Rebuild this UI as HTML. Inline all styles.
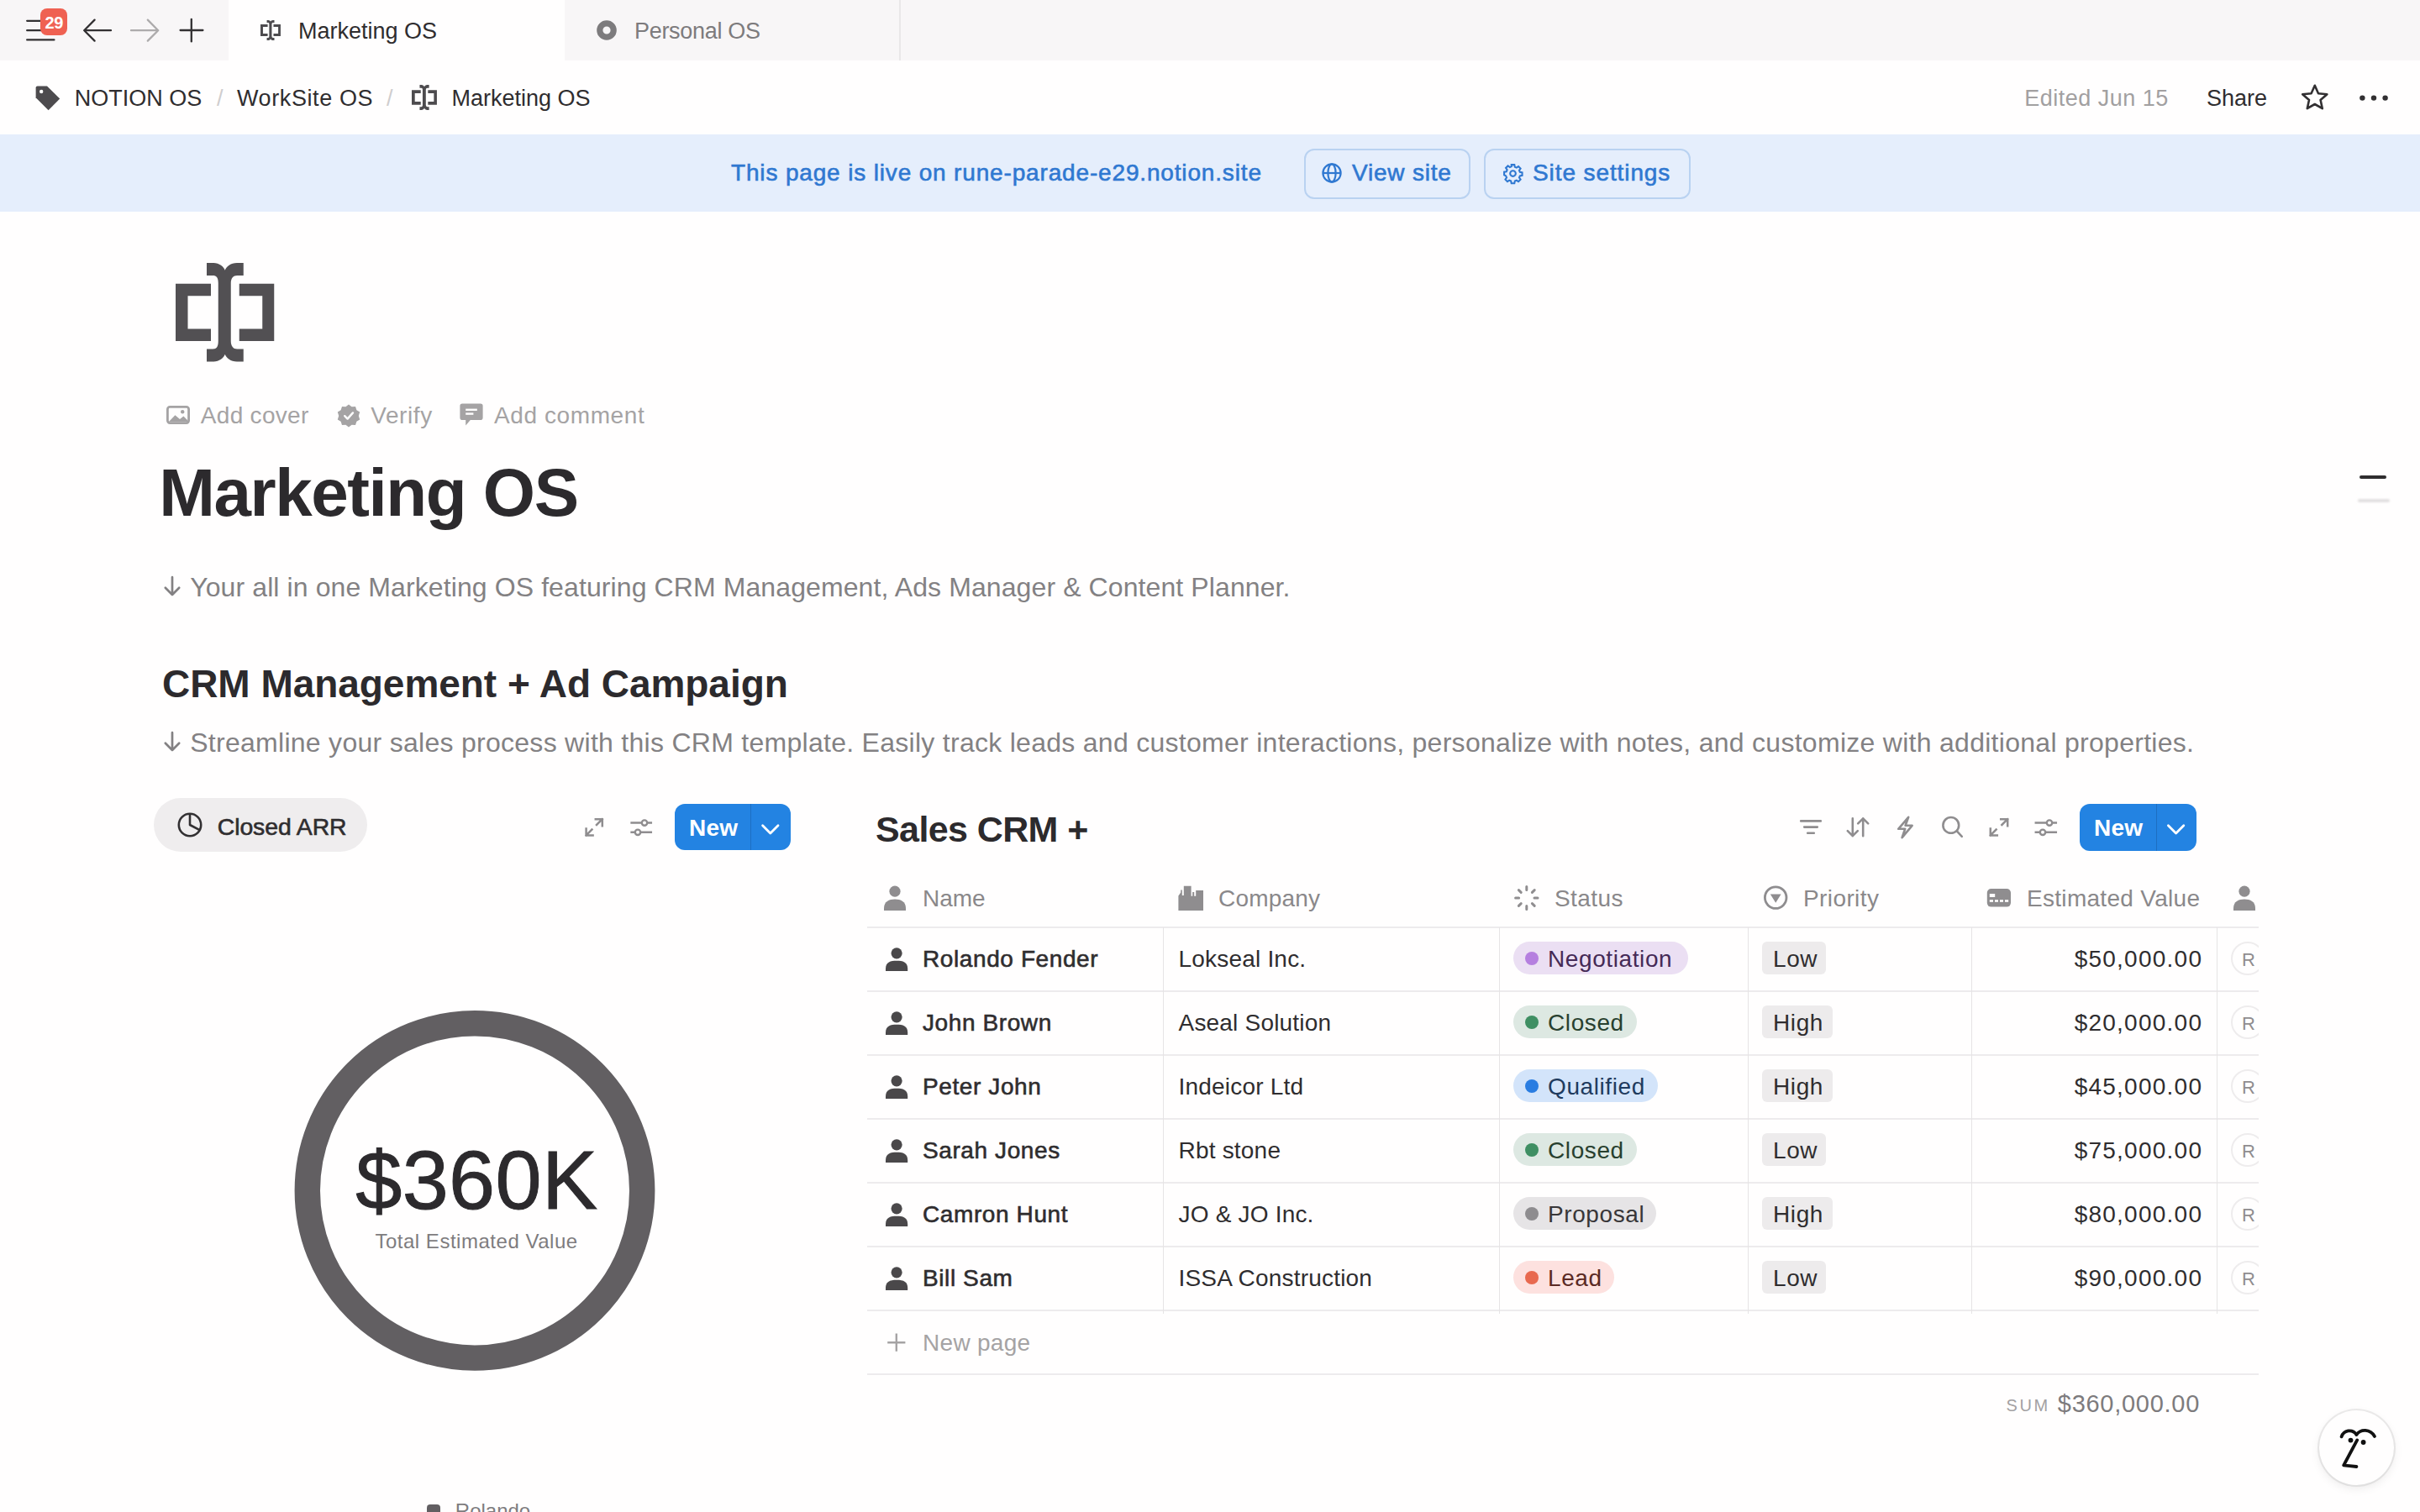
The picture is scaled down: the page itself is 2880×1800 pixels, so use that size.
<!DOCTYPE html>
<html><head><meta charset="utf-8">
<style>
html,body{margin:0;padding:0;background:#fffefe;}
#root{zoom:2;width:1440px;height:900px;position:relative;overflow:hidden;background:#fffefe;font-family:"Liberation Sans",sans-serif;color:#2f2d2f;}
.t{position:absolute;line-height:1;white-space:nowrap;}
.a{position:absolute;}
svg{position:absolute;overflow:visible;}
.med{-webkit-text-stroke:0.3px currentColor;}
</style></head>
<body><div id="root">

<!-- TAB BAR -->
<div class="a" style="left:0;top:0;width:1440px;height:36px;background:#f8f6f7;"></div>
<div class="a" style="left:136px;top:0;width:200px;height:36px;background:#fffefe;"></div>
<div class="a" style="left:535px;top:0;width:1px;height:36px;background:#e9e7e8;"></div>

<!-- hamburger -->
<svg style="left:0;top:0" width="1" height="1">
  <g stroke="#323032" stroke-width="1.15" stroke-linecap="round" fill="none">
    <line x1="16.1" y1="12.4" x2="26" y2="12.4"/>
    <line x1="16.1" y1="18.1" x2="26" y2="18.1"/>
    <line x1="16.1" y1="23.7" x2="32.2" y2="23.7"/>
  </g>
</svg>
<div class="a" style="left:24.1px;top:5px;width:15.9px;height:15.8px;border-radius:4px;background:#ef6152;"></div>
<div class="t" style="left:24.1px;top:8.60px;width:16px;text-align:center;font-size:10px;font-weight:bold;color:#fff;letter-spacing:-0.2px">29</div>
<!-- back / forward / plus -->
<svg style="left:0;top:0" width="1" height="1">
  <g stroke="#323032" stroke-width="1.15" stroke-linecap="round" stroke-linejoin="round" fill="none">
    <path d="M66 18.1 H50.1 M56.3 11.8 L50.1 18.1 L56.3 24.3"/>
    <path d="M113.9 11.4 V24.7 M107.3 18 H120.7"/>
  </g>
  <g stroke="#adabac" stroke-width="1.15" stroke-linecap="round" stroke-linejoin="round" fill="none">
    <path d="M78 18.1 H94.1 M87.9 11.8 L94.1 18.1 L87.9 24.3"/>
  </g>
</svg>
<!-- tab 1 -->
<svg style="left:155px;top:12px" width="12" height="12" viewBox="237 93 470 470">
  <g fill="#4d4b4e">
    <path d="M237,192 H405 V250 H295 V407 H405 V465 H237 Z"/>
    <path d="M706,192 H540 V250 H650 V407 H540 V465 H706 Z"/>
    <path d="M385,93 H415 C445,93 465,110 472,128 C479,110 499,93 529,93 H560 V153 H530 C512,153 500,165 500,190 V465 C500,490 512,503 530,503 H560 V563 H529 C499,563 479,546 472,528 C465,546 445,563 415,563 H385 V503 H415 C433,503 440,490 440,465 V190 C440,165 433,153 415,153 H385 Z"/>
  </g>
</svg>
<div class="t" style="left:177.5px;top:12.00px;font-size:13.5px;color:#2f2d2f">Marketing OS</div>
<!-- tab 2 -->
<svg style="left:355px;top:12px" width="12" height="12" viewBox="0 0 12 12">
  <circle cx="6" cy="6" r="4.1" fill="none" stroke="#7d7b7d" stroke-width="3.6"/>
</svg>
<div class="t" style="left:377.5px;top:12.00px;font-size:13.5px;color:#7d7b7d;letter-spacing:-0.15px">Personal OS</div>

<!-- BREADCRUMB -->
<svg style="left:21px;top:51px" width="15" height="15" viewBox="0 0 15 15">
  <path d="M0.3 1.2 Q0.3 0.2 1.3 0.2 H7 L14.6 7.8 L7.8 14.6 L0.3 7.1 Z" fill="#4d4b4e"/>
  <circle cx="3.6" cy="3.5" r="1.1" fill="#fffefe"/>
</svg>
<div class="t" style="left:44.4px;top:52.10px;font-size:13.5px">NOTION OS</div>
<div class="t" style="left:129px;top:52.10px;font-size:13.5px;color:#cfcdce">/</div>
<div class="t" style="left:141px;top:52.10px;font-size:13.5px;letter-spacing:0.3px">WorkSite OS</div>
<div class="t" style="left:230px;top:52.10px;font-size:13.5px;color:#cfcdce">/</div>
<svg style="left:245px;top:50.6px" width="15" height="15" viewBox="237 93 470 470">
  <g fill="#4d4b4e">
    <path d="M237,192 H405 V250 H295 V407 H405 V465 H237 Z"/>
    <path d="M706,192 H540 V250 H650 V407 H540 V465 H706 Z"/>
    <path d="M385,93 H415 C445,93 465,110 472,128 C479,110 499,93 529,93 H560 V153 H530 C512,153 500,165 500,190 V465 C500,490 512,503 530,503 H560 V563 H529 C499,563 479,546 472,528 C465,546 445,563 415,563 H385 V503 H415 C433,503 440,490 440,465 V190 C440,165 433,153 415,153 H385 Z"/>
  </g>
</svg>
<div class="t" style="left:268.75px;top:52.10px;font-size:13.5px">Marketing OS</div>

<div class="t" style="left:1204.6px;top:52.10px;font-size:13.5px;color:#a2a0a1;letter-spacing:0.25px">Edited Jun 15</div>
<div class="t" style="left:1313px;top:52.10px;font-size:13.5px">Share</div>
<svg style="left:1368.75px;top:49.75px" width="17" height="16" viewBox="0 0 17 16">
  <path d="M8.4 0.9 L10.5 5.6 L15.7 6.1 L11.8 9.5 L12.9 14.6 L8.4 12 L3.9 14.6 L5 9.5 L1.1 6.1 L6.3 5.6 Z" fill="none" stroke="#323032" stroke-width="1.3" stroke-linejoin="round"/>
</svg>
<svg style="left:1404px;top:56px" width="17" height="5" viewBox="0 0 17 5">
  <circle cx="1.7" cy="2.3" r="1.6" fill="#323032"/><circle cx="8.5" cy="2.3" r="1.6" fill="#323032"/><circle cx="15.3" cy="2.3" r="1.6" fill="#323032"/>
</svg>

<!-- BANNER -->
<div class="a" style="left:0;top:80px;width:1440px;height:46px;background:#e5eefc;"></div>
<div class="t med" style="left:435px;top:95.9px;font-size:14px;color:#2f78d1;letter-spacing:0.42px">This page is live on rune-parade-e29.notion.site</div>
<div class="a" style="left:776px;top:88.5px;width:97px;height:28px;border:1px solid #b9d2f1;border-radius:6px;"></div>
<svg style="left:786.5px;top:97px" width="12" height="12" viewBox="0 0 12 12">
  <g fill="none" stroke="#2f78d1" stroke-width="1.1"><circle cx="6" cy="6" r="5.3"/><ellipse cx="6" cy="6" rx="2.3" ry="5.3"/><line x1="0.7" y1="6" x2="11.3" y2="6"/></g>
</svg>
<div class="t med" style="left:804.5px;top:96.2px;font-size:14px;color:#2f78d1;letter-spacing:0.4px">View site</div>
<div class="a" style="left:883px;top:88.5px;width:121px;height:28px;border:1px solid #b9d2f1;border-radius:6px;"></div>
<svg style="left:894px;top:96.8px" width="12.5" height="12.5" viewBox="0 0 24 24">
  <path fill="none" stroke="#2f78d1" stroke-width="2" d="M10.3 2h3.4l.5 2.6 1.9.8 2.2-1.5 2.4 2.4-1.5 2.2.8 1.9 2.6.5v3.4l-2.6.5-.8 1.9 1.5 2.2-2.4 2.4-2.2-1.5-1.9.8-.5 2.6h-3.4l-.5-2.6-1.9-.8-2.2 1.5-2.4-2.4 1.5-2.2-.8-1.9L2 13.7v-3.4l2.6-.5.8-1.9-1.5-2.2 2.4-2.4 2.2 1.5 1.9-.8z"/>
  <circle cx="12" cy="12" r="3.2" fill="none" stroke="#2f78d1" stroke-width="2"/>
</svg>
<div class="t med" style="left:912px;top:96.2px;font-size:14px;color:#2f78d1;letter-spacing:0.45px">Site settings</div>


<!-- PAGE ICON -->
<svg style="left:104.6px;top:156.6px" width="58.75" height="58.75" viewBox="237 93 470 470">
  <g fill="#525053">
    <path d="M237,192 H405 V250 H295 V407 H405 V465 H237 Z"/>
    <path d="M706,192 H540 V250 H650 V407 H540 V465 H706 Z"/>
    <path d="M385,93 H415 C445,93 465,110 472,128 C479,110 499,93 529,93 H560 V153 H530 C512,153 500,165 500,190 V465 C500,490 512,503 530,503 H560 V563 H529 C499,563 479,546 472,528 C465,546 445,563 415,563 H385 V503 H415 C433,503 440,490 440,465 V190 C440,165 433,153 415,153 H385 Z"/>
  </g>
</svg>

<!-- ADD COVER ROW -->
<svg style="left:99px;top:241.5px" width="14" height="11" viewBox="0 0 14 11">
  <rect x="0.7" y="0.7" width="12.6" height="9.6" rx="1.4" fill="none" stroke="#a5a3a4" stroke-width="1.4"/>
  <path d="M1.5 9.5 L5.2 5.6 L8 8 L10.2 6.3 L12.6 8.6 V9.6 H1.5 Z" fill="#a5a3a4"/>
  <circle cx="9.6" cy="3.6" r="1.1" fill="#a5a3a4"/>
</svg>
<div class="t" style="left:119.4px;top:240.45px;font-size:14px;color:#a5a3a4;letter-spacing:0.15px">Add cover</div>
<svg style="left:200.6px;top:240.25px" width="14" height="14" viewBox="0 0 14 14">
  <path d="M7 0.3 L8.8 1.6 L11 1.5 L11.7 3.6 L13.6 4.8 L12.9 7 L13.6 9.2 L11.7 10.4 L11 12.5 L8.8 12.4 L7 13.7 L5.2 12.4 L3 12.5 L2.3 10.4 L0.4 9.2 L1.1 7 L0.4 4.8 L2.3 3.6 L3 1.5 L5.2 1.6 Z" fill="#a5a3a4"/>
  <path d="M4.6 7.1 L6.3 8.8 L9.5 5.2" fill="none" stroke="#fffefe" stroke-width="1.2" stroke-linecap="round" stroke-linejoin="round"/>
</svg>
<div class="t" style="left:220.6px;top:240.45px;font-size:14px;color:#a5a3a4;letter-spacing:0.3px">Verify</div>
<svg style="left:273.5px;top:240px" width="14" height="14" viewBox="0 0 14 14">
  <path d="M1.6 0.2 H12.4 Q13.8 0.2 13.8 1.6 V8.6 Q13.8 10 12.4 10 H6.4 L3.6 13.2 V10 H1.6 Q0.2 10 0.2 8.6 V1.6 Q0.2 0.2 1.6 0.2 Z" fill="#a5a3a4"/>
  <rect x="3.6" y="3.3" width="6.8" height="1.2" fill="#fffefe"/>
  <rect x="3.6" y="5.7" width="4.6" height="1.2" fill="#fffefe"/>
</svg>
<div class="t" style="left:294px;top:240.45px;font-size:14px;color:#a5a3a4;letter-spacing:0.3px">Add comment</div>

<!-- TITLE -->
<div class="t" style="left:94.6px;top:273.64px;font-size:40px;font-weight:bold;color:#2c2a2d;letter-spacing:-0.72px">Marketing OS</div>

<!-- DESC -->
<svg style="left:97.25px;top:343.2px" width="10" height="12" viewBox="0 0 10 12"><path d="M5 0.6 V11 M0.9 6.9 L5 11 L9.1 6.9" fill="none" stroke="#838183" stroke-width="1.35" stroke-linecap="round" stroke-linejoin="round"/></svg><div class="t" style="left:113.1px;top:341.46px;font-size:16px;color:#838183;letter-spacing:0.05px">Your all in one Marketing OS featuring CRM Management, Ads Manager &amp; Content Planner.</div>
<div class="t" style="left:96.5px;top:395.50px;font-size:23px;font-weight:bold;color:#2c2a2d;letter-spacing:-0.02px">CRM Management + Ad Campaign</div>
<svg style="left:97.25px;top:435.7px" width="10" height="12" viewBox="0 0 10 12"><path d="M5 0.6 V11 M0.9 6.9 L5 11 L9.1 6.9" fill="none" stroke="#838183" stroke-width="1.35" stroke-linecap="round" stroke-linejoin="round"/></svg><div class="t" style="left:113.1px;top:433.96px;font-size:16px;color:#838183;letter-spacing:0.14px">Streamline your sales process with this CRM template. Easily track leads and customer interactions, personalize with notes, and customize with additional properties.</div>


<!-- CHART VIEW HEADER -->
<div class="a" style="left:91.25px;top:475px;width:127px;height:32px;border-radius:16px;background:#efedee;"></div>
<svg style="left:105.6px;top:483.5px" width="15" height="15" viewBox="0 0 15 15">
  <g fill="none" stroke="#323032" stroke-width="1.3" stroke-linejoin="round"><circle cx="7.5" cy="7.5" r="6.6"/><path d="M7.5 0.9 V7.5 L13.3 10.6"/></g>
</svg>
<div class="t med" style="left:129.4px;top:484.9px;font-size:14.2px;color:#2f2d2f;letter-spacing:-0.05px">Closed ARR</div>

<svg style="left:0;top:0" width="1" height="1">
  <g fill="none" stroke="#8f8d8f" stroke-width="1.25" stroke-linecap="square">
    <path d="M352.2 493.8 L348.8 497.2 M348.8 493.2 V497.2 H352.8"/>
    <path d="M355 491 L358.4 487.6 M354.4 487.6 H358.4 V491.6"/>
    <path d="M375.8 489.8 H381.6 M385.4 489.8 H387.4 M375.8 495.4 H377.6 M381.4 495.4 H387.4"/>
  </g>
  <g fill="none" stroke="#8f8d8f" stroke-width="1.2"><circle cx="383.5" cy="489.8" r="1.6"/><circle cx="379.5" cy="495.4" r="1.6"/></g>
</svg>
<div class="a" style="left:401.6px;top:478.4px;width:68.7px;height:27.85px;border-radius:6px;background:#2383e2;"></div>
<div class="a" style="left:446.6px;top:478.4px;width:0.6px;height:27.85px;background:#1d6fc2;"></div>
<div class="t" style="left:410px;top:486.05px;font-size:14px;font-weight:bold;color:#fff;letter-spacing:0.1px">New</div>
<svg style="left:0;top:0" width="1" height="1"><path d="M453.8 491.4 L458.4 496 L463 491.4" fill="none" stroke="#fff" stroke-width="1.4" stroke-linecap="round" stroke-linejoin="round"/></svg>

<!-- DONUT -->
<svg style="left:0;top:0" width="1" height="1"><circle cx="282.5" cy="708.7" r="99.6" fill="none" stroke="#625f62" stroke-width="15.2"/></svg>
<div class="t" style="left:211.6px;top:677.7px;font-size:49.5px;color:#2c2a2d;letter-spacing:0.2px;-webkit-text-stroke:0.5px #2c2a2d">$360K</div>
<div class="t" style="left:223.2px;top:733.14px;font-size:12px;color:#7e7c7e;letter-spacing:0.26px">Total Estimated Value</div>
<div class="a" style="left:254.2px;top:895.5px;width:7.7px;height:8px;border-radius:2px;background:#625f62;"></div>
<div class="t" style="left:270.9px;top:893.7px;font-size:12px;color:#7e7c7e;letter-spacing:0px">Rolando</div>

<!-- SALES CRM HEADER -->
<div class="t" style="left:521px;top:482.8px;font-size:21.5px;font-weight:bold;color:#2c2a2d;letter-spacing:-0.3px">Sales CRM +</div>
<svg style="left:0;top:0" width="1" height="1">
  <g fill="none" stroke="#8f8d8f" stroke-width="1.3" stroke-linecap="round" stroke-linejoin="round">
    <path d="M1071.6 488.7 H1083.4 M1073.6 492.3 H1081.4 M1075.6 495.9 H1079.4"/>
    <path d="M1102.4 487.2 V497.6 M1099.4 494.6 L1102.4 497.6 L1105.4 494.6"/>
    <path d="M1108.6 497.6 V487.2 M1105.6 490.2 L1108.6 487.2 L1111.6 490.2"/>
    <path d="M1135.6 486.4 L1129.6 493.4 H1133.6 L1131.8 498.6 L1137.8 491.4 H1133.8 Z"/>
    <circle cx="1160.9" cy="491.2" r="4.7"/>
    <path d="M1164.4 494.7 L1167.4 497.9"/>
  </g>
  <g fill="none" stroke="#8f8d8f" stroke-width="1.25" stroke-linecap="square">
    <path d="M1187.8 493.8 L1184.4 497.2 M1184.4 493.2 V497.2 H1188.4"/>
    <path d="M1191.2 491 L1194.6 487.6 M1190.6 487.6 H1194.6 V491.6"/>
    <path d="M1211.4 489.8 H1217.6 M1221.4 489.8 H1223.4 M1211.4 495.4 H1213.6 M1217.4 495.4 H1223.4"/>
  </g>
  <g fill="none" stroke="#8f8d8f" stroke-width="1.2"><circle cx="1219.5" cy="489.8" r="1.6"/><circle cx="1215.5" cy="495.4" r="1.6"/></g>
</svg>
<div class="a" style="left:1237.5px;top:478.5px;width:69.4px;height:27.75px;border-radius:6px;background:#2383e2;"></div>
<div class="a" style="left:1283.1px;top:478.5px;width:0.6px;height:27.75px;background:#1d6fc2;"></div>
<div class="t" style="left:1246px;top:486.05px;font-size:14px;font-weight:bold;color:#fff;letter-spacing:0.1px">New</div>
<svg style="left:0;top:0" width="1" height="1"><path d="M1290.2 491.4 L1294.8 496 L1299.4 491.4" fill="none" stroke="#fff" stroke-width="1.4" stroke-linecap="round" stroke-linejoin="round"/></svg>


<!-- TABLE -->
<div class="a" style="left:516px;top:551.5px;width:827.75px;height:1px;background:#edebed;"></div>
<div class="a" style="left:516px;top:589.5px;width:827.75px;height:1px;background:#edebed;"></div>
<div class="a" style="left:516px;top:627.5px;width:827.75px;height:1px;background:#edebed;"></div>
<div class="a" style="left:516px;top:665.5px;width:827.75px;height:1px;background:#edebed;"></div>
<div class="a" style="left:516px;top:703.5px;width:827.75px;height:1px;background:#edebed;"></div>
<div class="a" style="left:516px;top:741.5px;width:827.75px;height:1px;background:#edebed;"></div>
<div class="a" style="left:516px;top:779.5px;width:827.75px;height:1px;background:#edebed;"></div>
<div class="a" style="left:516px;top:817.5px;width:827.75px;height:1px;background:#edebed;"></div>
<div class="a" style="left:691.75px;top:552px;width:0.5px;height:230px;background:#e6e4e5;"></div>
<div class="a" style="left:891.75px;top:552px;width:0.5px;height:230px;background:#e6e4e5;"></div>
<div class="a" style="left:1039.75px;top:552px;width:0.5px;height:230px;background:#e6e4e5;"></div>
<div class="a" style="left:1172.75px;top:552px;width:0.5px;height:230px;background:#e6e4e5;"></div>
<div class="a" style="left:1318.75px;top:552px;width:0.5px;height:230px;background:#e6e4e5;"></div>
<svg style="left:0;top:0" width="1" height="1">
  <g fill="#8f8d8f">
    <circle cx="532.5" cy="530.6" r="3.3"/>
    <path d="M526 542 V540.6 C526 536.6 529 535.2 532.5 535.2 C536 535.2 539 536.6 539 540.6 V542 Z"/>
    <path d="M701.2 542 V533.2 L702.6 531.2 V529.8 H703.4 V533 H704.4 V527.4 H708.8 V533.4 H709.6 V531 H710.6 V533.4 H711.6 V530 H716 V542 Z"/>
    <circle cx="1335.5" cy="530.6" r="3.3"/>
    <path d="M1329 542 V540.6 C1329 536.6 1332 535.2 1335.5 535.2 C1339 535.2 1342 536.6 1342 540.6 V542 Z"/>
    <rect x="1182.4" y="529" width="14.1" height="10.8" rx="2.4"/>
  </g>
  <g fill="#fffefe">
    <rect x="1183.9" y="532" width="3.2" height="2"/>
    <rect x="1183.9" y="535.6" width="2.1" height="1.3"/><rect x="1187" y="535.6" width="2" height="1.3"/><rect x="1190" y="535.6" width="2" height="1.3"/><rect x="1193" y="535.6" width="2.1" height="1.3"/>
  </g>
  <g stroke="#8f8d8f" stroke-width="1.5" stroke-linecap="round">
    <path d="M908.4 527.8 V529.8 M908.4 539.2 V541.2 M901.8 534.5 H903.8 M913 534.5 H915 M903.7 529.8 L905.1 531.2 M911.7 537.8 L913.1 539.2 M903.7 539.2 L905.1 537.8 M911.7 531.2 L913.1 529.8"/>
  </g>
  <circle cx="1056.6" cy="534.3" r="6.4" fill="none" stroke="#8f8d8f" stroke-width="1.4"/>
  <path d="M1053.4 532.2 H1059.8 L1056.6 537.4 Z" fill="#8f8d8f"/>
</svg>
<div class="t" style="left:549px;top:527.95px;font-size:14px;color:#8a888a;letter-spacing:0px">Name</div>
<div class="t" style="left:725px;top:527.95px;font-size:14px;color:#8a888a;letter-spacing:0.1px">Company</div>
<div class="t" style="left:925px;top:527.95px;font-size:14px;color:#8a888a;letter-spacing:0.2px">Status</div>
<div class="t" style="left:1073px;top:527.95px;font-size:14px;color:#8a888a;letter-spacing:0.2px">Priority</div>
<div class="t" style="left:1206px;top:527.95px;font-size:14px;color:#8a888a;letter-spacing:0.15px">Estimated Value</div>
<svg style="left:526.9px;top:564px" width="13.1" height="14" viewBox="0 0 13.1 14"><circle cx="6.55" cy="3.4" r="3.3" fill="#4a484a"/><path d="M0 14 V12.6 C0 8.6 3 7.9 6.55 7.9 C10.1 7.9 13.1 8.6 13.1 12.6 V14 Z" fill="#4a484a"/></svg>
<div class="t med" style="left:549px;top:564.05px;font-size:14px;color:#2f2d2f;letter-spacing:0.3px">Rolando Fender</div>
<div class="t" style="left:701.25px;top:564.05px;font-size:14px;color:#2f2d2f;letter-spacing:0.1px">Lokseal Inc.</div>
<div class="a" style="left:900.6px;top:560.6px;width:103.80px;height:19.6px;border-radius:10px;background:#ebdff3;"></div>
<div class="a" style="left:907.5px;top:566.6px;width:8px;height:8px;border-radius:4px;background:#b57fdf;"></div>
<div class="t" style="left:921px;top:564.15px;font-size:14px;color:#452a56;letter-spacing:0.3px">Negotiation</div>
<div class="a" style="left:1048.6px;top:560.6px;width:37.7px;height:19.6px;border-radius:3px;background:#edebec;"></div>
<div class="t" style="left:1055px;top:564.15px;font-size:14px;color:#2f2d2f;letter-spacing:0.3px">Low</div>
<div class="t" style="right:129.4px;top:564.05px;font-size:14px;color:#2f2d2f;letter-spacing:0.62px">$50,000.00</div>
<div class="a" style="left:1319.5px;top:552px;width:24.25px;height:37px;overflow:hidden;"><div class="a" style="left:8px;top:8.7px;width:18px;height:18px;border-radius:50%;border:1px solid #eeeced;background:#fffefe;"></div><div class="t" style="left:14.5px;top:13.90px;font-size:11px;color:#8f8d8f">R</div></div>
<svg style="left:526.9px;top:602px" width="13.1" height="14" viewBox="0 0 13.1 14"><circle cx="6.55" cy="3.4" r="3.3" fill="#4a484a"/><path d="M0 14 V12.6 C0 8.6 3 7.9 6.55 7.9 C10.1 7.9 13.1 8.6 13.1 12.6 V14 Z" fill="#4a484a"/></svg>
<div class="t med" style="left:549px;top:602.05px;font-size:14px;color:#2f2d2f;letter-spacing:0.3px">John Brown</div>
<div class="t" style="left:701.25px;top:602.05px;font-size:14px;color:#2f2d2f;letter-spacing:0.1px">Aseal Solution</div>
<div class="a" style="left:900.6px;top:598.6px;width:73.60px;height:19.6px;border-radius:10px;background:#dde8e2;"></div>
<div class="a" style="left:907.5px;top:604.6px;width:8px;height:8px;border-radius:4px;background:#3f8f63;"></div>
<div class="t" style="left:921px;top:602.15px;font-size:14px;color:#28402f;letter-spacing:0.3px">Closed</div>
<div class="a" style="left:1048.6px;top:598.6px;width:41.9px;height:19.6px;border-radius:3px;background:#edebec;"></div>
<div class="t" style="left:1055px;top:602.15px;font-size:14px;color:#2f2d2f;letter-spacing:0.3px">High</div>
<div class="t" style="right:129.4px;top:602.05px;font-size:14px;color:#2f2d2f;letter-spacing:0.62px">$20,000.00</div>
<div class="a" style="left:1319.5px;top:590px;width:24.25px;height:37px;overflow:hidden;"><div class="a" style="left:8px;top:8.7px;width:18px;height:18px;border-radius:50%;border:1px solid #eeeced;background:#fffefe;"></div><div class="t" style="left:14.5px;top:13.90px;font-size:11px;color:#8f8d8f">R</div></div>
<svg style="left:526.9px;top:640px" width="13.1" height="14" viewBox="0 0 13.1 14"><circle cx="6.55" cy="3.4" r="3.3" fill="#4a484a"/><path d="M0 14 V12.6 C0 8.6 3 7.9 6.55 7.9 C10.1 7.9 13.1 8.6 13.1 12.6 V14 Z" fill="#4a484a"/></svg>
<div class="t med" style="left:549px;top:640.05px;font-size:14px;color:#2f2d2f;letter-spacing:0.3px">Peter John</div>
<div class="t" style="left:701.25px;top:640.05px;font-size:14px;color:#2f2d2f;letter-spacing:0.1px">Indeicor Ltd</div>
<div class="a" style="left:900.6px;top:636.6px;width:86.15px;height:19.6px;border-radius:10px;background:#d3e4fa;"></div>
<div class="a" style="left:907.5px;top:642.6px;width:8px;height:8px;border-radius:4px;background:#2a7de1;"></div>
<div class="t" style="left:921px;top:640.15px;font-size:14px;color:#1f3b5e;letter-spacing:0.3px">Qualified</div>
<div class="a" style="left:1048.6px;top:636.6px;width:41.9px;height:19.6px;border-radius:3px;background:#edebec;"></div>
<div class="t" style="left:1055px;top:640.15px;font-size:14px;color:#2f2d2f;letter-spacing:0.3px">High</div>
<div class="t" style="right:129.4px;top:640.05px;font-size:14px;color:#2f2d2f;letter-spacing:0.62px">$45,000.00</div>
<div class="a" style="left:1319.5px;top:628px;width:24.25px;height:37px;overflow:hidden;"><div class="a" style="left:8px;top:8.7px;width:18px;height:18px;border-radius:50%;border:1px solid #eeeced;background:#fffefe;"></div><div class="t" style="left:14.5px;top:13.90px;font-size:11px;color:#8f8d8f">R</div></div>
<svg style="left:526.9px;top:678px" width="13.1" height="14" viewBox="0 0 13.1 14"><circle cx="6.55" cy="3.4" r="3.3" fill="#4a484a"/><path d="M0 14 V12.6 C0 8.6 3 7.9 6.55 7.9 C10.1 7.9 13.1 8.6 13.1 12.6 V14 Z" fill="#4a484a"/></svg>
<div class="t med" style="left:549px;top:678.05px;font-size:14px;color:#2f2d2f;letter-spacing:0.3px">Sarah Jones</div>
<div class="t" style="left:701.25px;top:678.05px;font-size:14px;color:#2f2d2f;letter-spacing:0.1px">Rbt stone</div>
<div class="a" style="left:900.6px;top:674.6px;width:73.60px;height:19.6px;border-radius:10px;background:#dde8e2;"></div>
<div class="a" style="left:907.5px;top:680.6px;width:8px;height:8px;border-radius:4px;background:#3f8f63;"></div>
<div class="t" style="left:921px;top:678.15px;font-size:14px;color:#28402f;letter-spacing:0.3px">Closed</div>
<div class="a" style="left:1048.6px;top:674.6px;width:37.7px;height:19.6px;border-radius:3px;background:#edebec;"></div>
<div class="t" style="left:1055px;top:678.15px;font-size:14px;color:#2f2d2f;letter-spacing:0.3px">Low</div>
<div class="t" style="right:129.4px;top:678.05px;font-size:14px;color:#2f2d2f;letter-spacing:0.62px">$75,000.00</div>
<div class="a" style="left:1319.5px;top:666px;width:24.25px;height:37px;overflow:hidden;"><div class="a" style="left:8px;top:8.7px;width:18px;height:18px;border-radius:50%;border:1px solid #eeeced;background:#fffefe;"></div><div class="t" style="left:14.5px;top:13.90px;font-size:11px;color:#8f8d8f">R</div></div>
<svg style="left:526.9px;top:716px" width="13.1" height="14" viewBox="0 0 13.1 14"><circle cx="6.55" cy="3.4" r="3.3" fill="#4a484a"/><path d="M0 14 V12.6 C0 8.6 3 7.9 6.55 7.9 C10.1 7.9 13.1 8.6 13.1 12.6 V14 Z" fill="#4a484a"/></svg>
<div class="t med" style="left:549px;top:716.05px;font-size:14px;color:#2f2d2f;letter-spacing:0.3px">Camron Hunt</div>
<div class="t" style="left:701.25px;top:716.05px;font-size:14px;color:#2f2d2f;letter-spacing:0.1px">JO &amp; JO Inc.</div>
<div class="a" style="left:900.6px;top:712.6px;width:85.15px;height:19.6px;border-radius:10px;background:#e6e4e6;"></div>
<div class="a" style="left:907.5px;top:718.6px;width:8px;height:8px;border-radius:4px;background:#8e8c8f;"></div>
<div class="t" style="left:921px;top:716.15px;font-size:14px;color:#383638;letter-spacing:0.3px">Proposal</div>
<div class="a" style="left:1048.6px;top:712.6px;width:41.9px;height:19.6px;border-radius:3px;background:#edebec;"></div>
<div class="t" style="left:1055px;top:716.15px;font-size:14px;color:#2f2d2f;letter-spacing:0.3px">High</div>
<div class="t" style="right:129.4px;top:716.05px;font-size:14px;color:#2f2d2f;letter-spacing:0.62px">$80,000.00</div>
<div class="a" style="left:1319.5px;top:704px;width:24.25px;height:37px;overflow:hidden;"><div class="a" style="left:8px;top:8.7px;width:18px;height:18px;border-radius:50%;border:1px solid #eeeced;background:#fffefe;"></div><div class="t" style="left:14.5px;top:13.90px;font-size:11px;color:#8f8d8f">R</div></div>
<svg style="left:526.9px;top:754px" width="13.1" height="14" viewBox="0 0 13.1 14"><circle cx="6.55" cy="3.4" r="3.3" fill="#4a484a"/><path d="M0 14 V12.6 C0 8.6 3 7.9 6.55 7.9 C10.1 7.9 13.1 8.6 13.1 12.6 V14 Z" fill="#4a484a"/></svg>
<div class="t med" style="left:549px;top:754.05px;font-size:14px;color:#2f2d2f;letter-spacing:0.3px">Bill Sam</div>
<div class="t" style="left:701.25px;top:754.05px;font-size:14px;color:#2f2d2f;letter-spacing:0.1px">ISSA Construction</div>
<div class="a" style="left:900.6px;top:750.6px;width:60.00px;height:19.6px;border-radius:10px;background:#fde1df;"></div>
<div class="a" style="left:907.5px;top:756.6px;width:8px;height:8px;border-radius:4px;background:#e8694f;"></div>
<div class="t" style="left:921px;top:754.15px;font-size:14px;color:#5b2a24;letter-spacing:0.3px">Lead</div>
<div class="a" style="left:1048.6px;top:750.6px;width:37.7px;height:19.6px;border-radius:3px;background:#edebec;"></div>
<div class="t" style="left:1055px;top:754.15px;font-size:14px;color:#2f2d2f;letter-spacing:0.3px">Low</div>
<div class="t" style="right:129.4px;top:754.05px;font-size:14px;color:#2f2d2f;letter-spacing:0.62px">$90,000.00</div>
<div class="a" style="left:1319.5px;top:742px;width:24.25px;height:37px;overflow:hidden;"><div class="a" style="left:8px;top:8.7px;width:18px;height:18px;border-radius:50%;border:1px solid #eeeced;background:#fffefe;"></div><div class="t" style="left:14.5px;top:13.90px;font-size:11px;color:#8f8d8f">R</div></div>
<svg style="left:0;top:0" width="1" height="1"><path d="M533.4 793.8 V804.4 M528.1 799.1 H538.7" stroke="#a5a3a4" stroke-width="1.2" fill="none"/></svg>
<div class="t" style="left:549px;top:792.30px;font-size:14px;color:#a5a3a4;letter-spacing:0.15px">New page</div>
<div class="t" style="left:1193.75px;top:831.3px;font-size:10px;color:#a3a1a3;letter-spacing:1.3px">SUM</div>
<div class="t" style="left:1224.4px;top:828.7px;font-size:14.5px;color:#7d7b7d;letter-spacing:0.36px">$360,000.00</div>
<div class="a" style="left:1379.75px;top:839.4px;width:44.6px;height:44.6px;border-radius:50%;background:#fffefe;box-shadow:0 0 0 1px rgba(0,0,0,0.07),0 2px 6px rgba(0,0,0,0.08);"></div>
<svg style="left:0;top:0" width="1" height="1">
  <g fill="none" stroke="#111" stroke-width="1.9" stroke-linecap="round" stroke-linejoin="round">
    <path d="M1393.3 855.2 C1394.6 851.4 1399.6 850.2 1402.2 853.9"/>
    <path d="M1402.2 853.9 C1404.8 850.6 1410.2 850.4 1413 855"/>
    <path d="M1402.6 857.2 L1394.6 872.2 L1402.2 873"/>
  </g>
  <circle cx="1398.75" cy="857.3" r="1.45" fill="#111"/><circle cx="1406.3" cy="858.5" r="1.45" fill="#111"/>
</svg>

<!-- TOC indicator -->
<div class="a" style="left:1404px;top:283px;width:16px;height:2px;border-radius:1px;background:#2f2d2f;"></div>
<div class="a" style="left:1403px;top:297.2px;width:19px;height:2px;border-radius:1px;background:#e2e0e1;filter:blur(0.5px);"></div>

</div></body></html>
